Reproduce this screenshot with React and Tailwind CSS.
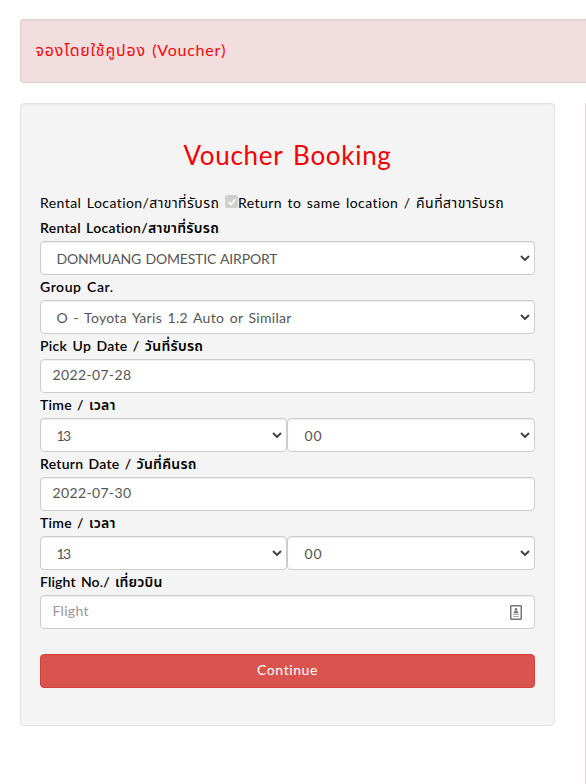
import { useState } from 'react';
import clsx from 'clsx';

const fieldBox =
  'flex h-[34px] w-full items-center rounded border border-[#ccc] bg-white text-sm text-[#555] shadow-[inset_0_1px_1px_rgba(0,0,0,0.075)]';

function Chevron() {
  return (
    <svg className="h-[6px] w-[10px] shrink-0" viewBox="0 0 10 6" fill="none">
      <path d="M1 1l4 4 4-4" stroke="#444" strokeWidth="2" />
    </svg>
  );
}

function ContactIcon() {
  return (
    <svg className="h-[15px] w-3 shrink-0" viewBox="0 0 12 15" fill="none">
      <rect x="0.75" y="0.75" width="10.5" height="13.5" rx="0.5" stroke="#777" strokeWidth="1.5" />
      <circle cx="6" cy="4.2" r="1.3" fill="#777" />
      <path d="M3.6 8.2c0-1.8.9-2.8 2.4-2.8s2.4 1 2.4 2.8z" fill="#777" />
      <path d="M3.2 9.5h5.6M3.2 11.5h5.6" stroke="#aaa" />
    </svg>
  );
}

function Label({ children, className }) {
  return (
    <div
      className={clsx(
        'flex h-[25px] items-center whitespace-nowrap pb-0.5 text-sm font-semibold text-black [word-spacing:1.5px]',
        className
      )}
    >
      <span>{children}</span>
    </div>
  );
}

function Select({ value, className }) {
  return (
    <div className={clsx(fieldBox, 'justify-between pl-[15.5px] pr-[4px]')}>
      <span className={clsx('whitespace-nowrap pt-0.5', className)}>{value}</span>
      <Chevron />
    </div>
  );
}

function DateField({ value }) {
  return <div className={clsx(fieldBox, 'px-[11.5px] pb-0.5 tracking-[0.35px]')}>{value}</div>;
}

function TimeRow() {
  return (
    <div className="grid grid-cols-[247px_248px]">
      <Select value="13" className="tracking-[-1.5px]" />
      <Select value="00" className="pl-px tracking-[1px]" />
    </div>
  );
}

export default function App() {
  const [flight, setFlight] = useState('');

  return (
    <div className="h-[784px] w-full overflow-hidden bg-white pl-5 pt-[19px] font-['Lato','Noto_Sans_Thai','Noto_Sans',sans-serif]">
      {/* voucher notice, runs past the right edge */}
      <div className="flex h-16 items-center rounded-l border border-r-0 border-[#dcd0d0] bg-[#f2dede] pb-0.5 pl-[14.5px] text-[#f50808] shadow-[inset_0_1px_1px_rgba(0,0,0,0.05)]">
        <span className="whitespace-nowrap text-base tracking-[0.78px] [word-spacing:1.5px]">จองโดยใช้คูปอง (Voucher)</span>
      </div>

      <div className="mt-5 flex justify-between">
        <div className="h-[623px] w-[535px] rounded border border-[#e3e3e3] bg-[#f4f4f4] px-[19px] pt-[33px] shadow-[inset_0_1px_1px_rgba(0,0,0,0.05)]">
          <h1 className="flex h-10 items-center justify-center whitespace-nowrap pb-1 text-[26px] tracking-[0.7px] text-[#f50000] [word-spacing:3px]">
            <span>Voucher Booking</span>
          </h1>

          <div className="mt-[13px] flex h-[26px] items-center whitespace-nowrap text-sm tracking-[0.43px] text-black [word-spacing:1.5px]">
            <span className="w-[185px]">Rental Location/สาขาที่รับรถ</span>
            <span className="mb-[3px] flex size-[13px] items-center justify-center rounded-xs bg-[#cfcfcf]">
              <svg className="size-[10px]" viewBox="0 0 10 10" fill="none">
                <path d="M1.5 5l2.5 2.5L8.5 2" stroke="#fff" strokeWidth="1.6" />
              </svg>
            </span>
            <span>Return to same location / คืนที่สาขารับรถ</span>
          </div>

          <Label className="tracking-[0.28px]">Rental Location/สาขาที่รับรถ</Label>
          <Select value="DONMUANG DOMESTIC AIRPORT" className="tracking-[-0.18px] [word-spacing:1px]" />
          <Label className="tracking-[0.55px]">Group Car.</Label>
          <Select value="O - Toyota Yaris 1.2 Auto or Similar" className="tracking-[0.3px] [word-spacing:1.6px]" />
          <Label className="tracking-[0.3px]">Pick Up Date / วันที่รับรถ</Label>
          <DateField value="2022-07-28" />
          <Label className="tracking-[0.25px]">Time / เวลา</Label>
          <TimeRow />
          <Label className="tracking-[0.25px]">Return Date / วันที่คืนรถ</Label>
          <DateField value="2022-07-30" />
          <Label className="tracking-[0.25px]">Time / เวลา</Label>
          <TimeRow />
          <Label className="tracking-[0.15px]">Flight No./ เที่ยวบิน</Label>
          <div className={clsx(fieldBox, 'pl-[11.5px] pr-3')}>
            <input
              className="min-w-0 flex-1 bg-transparent pb-0.5 tracking-[0.3px] outline-none placeholder:text-[#999]"
              placeholder="Flight"
              value={flight}
              onChange={(e) => setFlight(e.target.value)}
            />
            <ContactIcon />
          </div>

          <button className="mt-[25px] flex h-[34px] w-full items-center justify-center rounded border border-[#d43f3a] bg-[#d9534f] pb-0.5 text-sm tracking-[0.6px] text-white">
            Continue
          </button>
        </div>
        {/* left edge of the next panel */}
        <div className="h-[681px] w-px rounded-tl bg-[#e8ccd0]" />
      </div>
    </div>
  );
}
